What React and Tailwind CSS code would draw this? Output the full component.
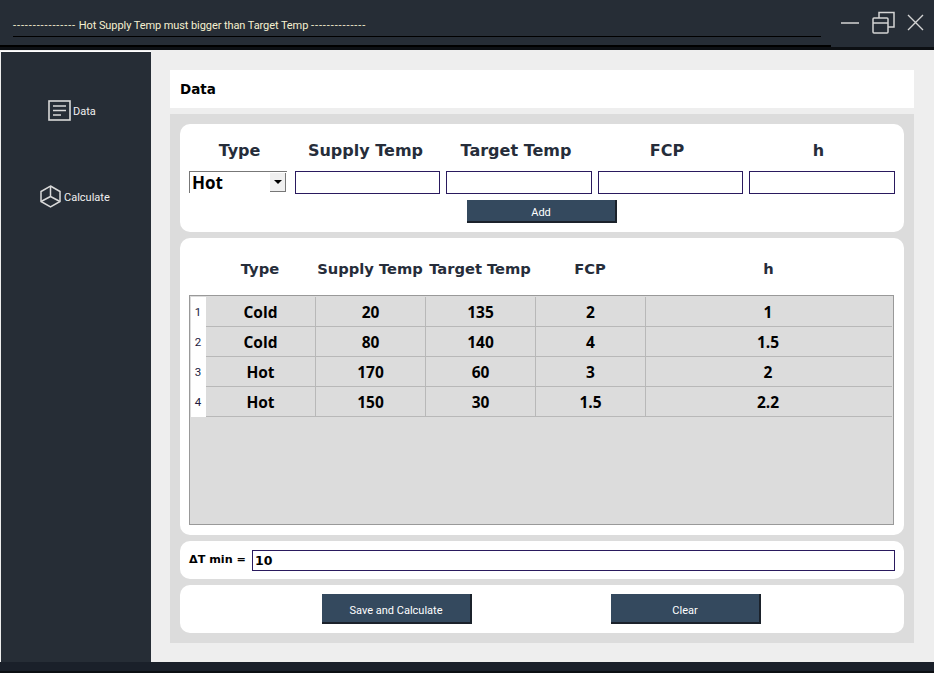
const rows = [
  ["Cold", "20", "135", "2", "1"],
  ["Cold", "80", "140", "4", "1.5"],
  ["Hot", "170", "60", "3", "2"],
  ["Hot", "150", "30", "1.5", "2.2"],
];

const uiFont = "font-['Roboto','Noto_Sans',sans-serif]";
const headFont = "font-['DejaVu_Sans',sans-serif] font-bold text-[#262d3a]";
const cellFont = "font-['Open_Sans','Noto_Sans',sans-serif] font-bold text-[15.5px] text-black";

const DataIcon = () => (
  <svg width="23" height="21" viewBox="0 0 23 21" fill="none" stroke="#d9d9d9">
    <rect x="1" y="1" width="21" height="19" strokeWidth="1.6" />
    <path d="M5 6h13M5 10.5h13M5 15h8" strokeWidth="1.6" />
  </svg>
);

const CubeIcon = () => (
  <svg width="21" height="23" viewBox="0 0 21 23" fill="none" stroke="#d9d9d9" strokeWidth="1.5">
    <path d="M10.5 1 20 6.5v10L10.5 22 1 16.5v-10z" />
    <path d="M10.5 1v10.5M10.5 11.5 1 16.5M10.5 11.5l9.5 5" />
  </svg>
);

const WindowControls = () => (
  <div className="flex items-center gap-[13px] pb-[2px] pl-[10px]">
    <svg width="18" height="4" viewBox="0 0 18 4" stroke="#d4d4d4" strokeWidth="1.5">
      <path d="M0 2h18" />
    </svg>
    <svg width="23" height="23" viewBox="0 0 23 23" fill="none" stroke="#d4d4d4" strokeWidth="1.5">
      <rect x="1" y="7" width="15" height="15" rx="1" />
      <path d="M1 12h15M7 7V1.5h15V16h-6" />
    </svg>
    <svg width="17" height="17" viewBox="0 0 17 17" stroke="#d4d4d4" strokeWidth="1.4" className="-ml-px">
      <path d="M1 1l15 15M16 1 1 16" />
    </svg>
  </div>
);

const TextBox = ({ className = "", value = "" }) => (
  <input
    readOnly
    value={value}
    className={`border border-[#2a1a5e] bg-white outline-none ${className}`}
  />
);

const Button = ({ label, className = "" }) => (
  <button className={`bg-[#34495e] border-r-2 border-b-2 border-[#1b222b] text-white text-[11px] ${uiFont} ${className}`}>
    {label}
  </button>
);

export default function App() {
  return (
    <div className="w-[934px] h-[673px] overflow-hidden flex flex-col bg-[#eeeeee]">
      <div className="h-[50px] shrink-0 flex bg-[#262d36] border-b-[3px] border-[#0c0f13]">
        <div className="w-[831px] pl-[13px] border-b-2 border-black">
          <div className={`h-[37px] w-[808px] pt-[17px] border-b border-black text-[11px] leading-[18px] text-[#f5f0d0] ${uiFont}`}>
            <span className="tracking-[0.9px]">----------------</span> <span className="tracking-[-0.08px]">Hot Supply Temp must bigger than Target Temp</span> <span className="tracking-[0.9px]">--------------</span>
          </div>
        </div>
        <WindowControls />
      </div>

      <div className="flex-1 flex min-h-0">
        <div className="w-[150px] ml-px mt-px bg-[#262d36] border-t border-white shrink-0 flex flex-col">
          <div className={`flex items-center h-[21px] mt-[48px] pl-[47px] gap-[2px] text-[11px] text-[#f0f0f0] ${uiFont}`}>
            <DataIcon />
            <span className="pt-[4px]">Data</span>
          </div>
          <div className={`flex items-center h-[23px] mt-[64px] pl-[39px] gap-[3px] text-[11px] text-[#f0f0f0] ${uiFont}`}>
            <CubeIcon />
            <span className="pt-[4px]">Calculate</span>
          </div>
        </div>

        <div className="flex-1 min-w-0 pl-[19px] pr-[20px] pt-[20px]">
          <div className="h-[38px] bg-white pl-[10px] pt-[1px] flex items-center text-[13.5px] font-bold text-black font-['DejaVu_Sans',sans-serif]">
            Data
          </div>

          <div className="h-[529px] mt-[6px] bg-[#dcdcdc] p-[10px] flex flex-col">
            <div className="h-[108px] bg-white rounded-[10px] pl-[9px] pr-[9px]">
              <div className={`grid grid-cols-[101px_151px_152px_151px_1fr] pt-[17px] h-[47px] text-[16px] leading-[20px] text-center ${headFont}`}>
                <div>Type</div>
                <div>Supply Temp</div>
                <div className="pr-[2px]">Target Temp</div>
                <div className="pr-[3px]">FCP</div>
                <div className="pr-[2px]">h</div>
              </div>
              <div className="flex gap-[6px]">
                <div className="w-[98px] h-[22px] mr-[2px] flex items-center border-t border-l border-[#777] bg-white font-['Open_Sans',sans-serif] font-bold text-[17px] text-black pl-[2px]">
                  <span className="flex-1">Hot</span>
                  <span className="w-[16px] h-[19px] mr-[1px] flex items-center justify-center bg-[#f0f0f0] border-r border-b border-[#777]">
                    <span className="border-x-[4px] border-x-transparent border-t-[4px] border-t-black" />
                  </span>
                </div>
                <TextBox className="w-[145px] h-[23px]" />
                <TextBox className="w-[146px] h-[23px]" />
                <TextBox className="w-[145px] h-[23px]" />
                <TextBox className="w-[146px] h-[23px]" />
              </div>
              <div className="flex justify-center pt-[6px]">
                <Button label="Add" className="w-[150px] h-[23px] pt-[5px]" />
              </div>
            </div>

            <div className="h-[297px] mt-[6px] bg-white rounded-[10px] pl-[9px] pr-[10px]">
              <div className={`grid grid-cols-[16px_110px_110px_110px_110px_1fr] pt-[21px] h-[57px] text-[14.7px] leading-[20px] text-center whitespace-nowrap ${headFont}`}>
                <div />
                <div>Type</div>
                <div>Supply Temp</div>
                <div>Target Temp</div>
                <div>FCP</div>
                <div className="pr-[2px]">h</div>
              </div>
              <div className="h-[230px] border border-[#999] p-px bg-[#dcdcdc]">
                {rows.map((row, i) => (
                  <div key={i} className="flex h-[30px]">
                    <div className={`w-[15px] bg-white flex items-center justify-center pr-[1px] pt-[2px] text-[11.5px] text-[#221a40] ${uiFont}`}>
                      {i + 1}
                    </div>
                    <div className="grid flex-1 grid-cols-[110px_110px_110px_110px_1fr] border-b border-[#b8b8b8]">
                      {row.map((cell, j) => (
                        <div key={j} className={`flex items-center justify-center pt-[3px] border-r border-[#b8b8b8] last:border-r-0 last:pr-[2px] ${cellFont}`}>
                          {cell}
                        </div>
                      ))}
                    </div>
                  </div>
                ))}
              </div>
            </div>

            <div className="h-[38px] mt-[6px] bg-white rounded-[10px] pl-[9px] pr-[9px] flex items-center">
              <span className="w-[63px] pt-[1px] font-['DejaVu_Sans',sans-serif] font-bold text-[11.2px] text-black whitespace-nowrap">
                ΔT min =
              </span>
              <TextBox value="10" className="flex-1 min-w-0 h-[21px] pl-[2px] font-['DejaVu_Sans',sans-serif] font-bold text-[12.5px] text-black" />
            </div>

            <div className="h-[48px] mt-[6px] bg-white rounded-[10px] flex items-center pl-[142px] gap-[139px]">
              <Button label="Save and Calculate" className="w-[150px] h-[30px] pt-[6px]" />
              <Button label="Clear" className="w-[150px] h-[30px] pt-[6px]" />
            </div>
          </div>
        </div>
      </div>

      <div className="h-[11px] shrink-0 bg-[#1a202a] border-b-2 border-[#0c0f13]" />
    </div>
  );
}
